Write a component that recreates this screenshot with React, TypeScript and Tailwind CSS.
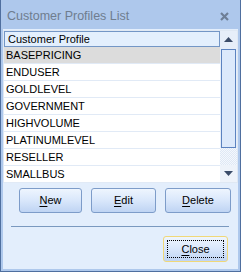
import React from "react";

const profiles = [
  "BASEPRICING",
  "ENDUSER",
  "GOLDLEVEL",
  "GOVERNMENT",
  "HIGHVOLUME",
  "PLATINUMLEVEL",
  "RESELLER",
  "SMALLBUS",
];

const font = { fontFamily: "'Liberation Sans', Arial, sans-serif" };

const Btn = ({ label, hot, focused }: { label: string; hot: string; focused?: boolean }) => {
  const rest = label.slice(1);
  return (
    <div
      className={`relative flex items-center justify-center rounded-[3px] border ${
        focused ? "border-[#f0d878]" : "border-[#7d9cc9]"
      } bg-gradient-to-b from-[#eef5fe] via-[#d9e7fb] to-[#bfd4f3] text-[11px] text-black`}
    >
      {focused && (
        <div className="absolute inset-[3px] border border-dotted border-black" />
      )}
      <span>
        <span className="underline underline-offset-2">{hot}</span>
        {rest}
      </span>
    </div>
  );
};

export default function App() {
  return (
    <div
      className="w-[241px] h-[272px] bg-[#aec8ec] border border-t-0 border-[#4f6f9f] flex flex-col"
      style={font}
    >
      {/* title bar */}
      <div className="h-[29px] flex items-center pl-[6px] pr-[11px] pt-[3px] shrink-0">
        <span className="text-[12.5px] text-[#6f7d8f]">Customer Profiles List</span>
        <svg className="ml-auto" width="9" height="9" viewBox="0 0 9 9">
          <path d="M1 1 L8 8 M8 1 L1 8" stroke="#6e7f96" strokeWidth="2.2" />
        </svg>
      </div>

      {/* client */}
      <div className="flex-1 mx-[2px] mb-[2px] bg-[#e3eefc] flex flex-col">
        {/* grid */}
        <div className="mt-[1px] h-[153px] flex border border-[#dfe8f3]">
          <div className="flex-1 flex flex-col bg-white">
            <div className="h-[16px] bg-[#e3effd] border border-[#7396c6] flex items-center pl-[3px] text-[11px] text-black">
              Customer Profile
            </div>
            {profiles.map((p, i) => (
              <div
                key={p}
                className={`h-[17px] flex items-center pl-[2px] text-[11px] text-black border-b border-[#e1eaf6] ${
                  i === 0 ? "bg-[#dcdcdc]" : "bg-white"
                }`}
              >
                {p}
              </div>
            ))}
          </div>
          {/* scrollbar */}
          <div className="w-[17px] flex flex-col bg-[#e6eef9]">
            <div className="h-[16px] flex items-center justify-center">
              <svg width="9" height="5" viewBox="0 0 9 5">
                <path d="M4.5 0 L9 5 L0 5 Z" fill="#3b4c69" />
              </svg>
            </div>
            <div className="mx-[1px] mt-[2px] h-[99px] border border-[#5c83c0] bg-[#dce9fb]" />
            <div
              className="flex-1"
              style={{
                backgroundImage:
                  "repeating-conic-gradient(#dfe8f5 0% 25%, #f4f8fd 0% 50%)",
                backgroundSize: "2px 2px",
              }}
            />
            <div className="h-[17px] flex items-center justify-center bg-[#eef3fa]">
              <svg width="9" height="5" viewBox="0 0 9 5">
                <path d="M0 0 L9 0 L4.5 5 Z" fill="#3b4c69" />
              </svg>
            </div>
          </div>
        </div>

        {/* action buttons */}
        <div className="mt-[5px] ml-[16px] grid grid-cols-[63px_65px_66px] gap-x-[9px] h-[25px]">
          <Btn label="New" hot="N" />
          <Btn label="Edit" hot="E" />
          <Btn label="Delete" hot="D" />
        </div>

        <div className="mt-[13px] mx-[8px] mr-[9px] h-[1px] bg-[#7a99bf]" />

        <div className="mt-[9px] ml-[160px] w-[65px] h-[26px] grid">
          <Btn label="Close" hot="C" focused />
        </div>
      </div>
    </div>
  );
}
